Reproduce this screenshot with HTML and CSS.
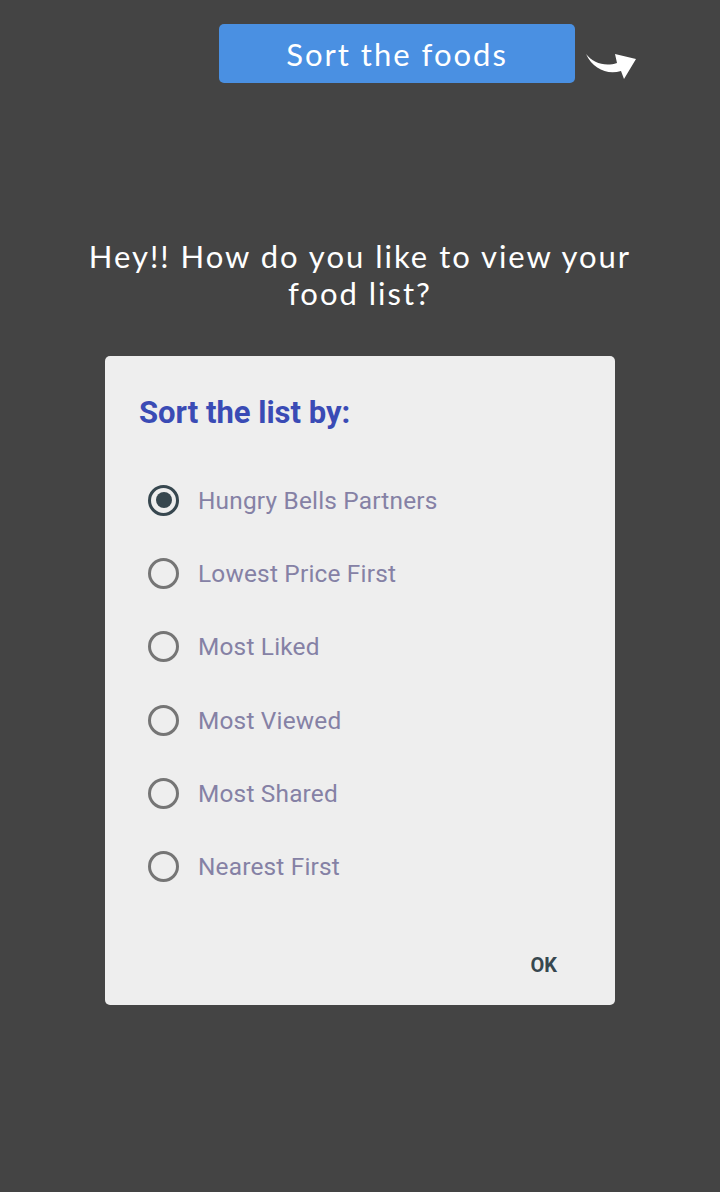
FILE: index.html
```html
<!DOCTYPE html>
<html>
<head>
<meta charset="utf-8">
<link rel="stylesheet" href="styles.css">
</head>
<body>
<div class="page">
  <div class="top">
    <div class="btn">Sort the foods</div>
    <svg class="arrow" width="56" height="36" viewBox="0 0 56 36">
      <path d="M1 5 C 8 14, 20 18, 32 14 L 30 5 L 51 10 L 39 30 L 36 22 C 22 26, 8 20, 1 5 Z" fill="#ffffff"/>
    </svg>
  </div>
  <h1 class="question">Hey!! How do you like to view your food list?</h1>
  <div class="dialog">
    <div class="title">Sort the list by:</div>
    <ul class="options">
      <li class="opt"><span class="radio checked"></span><span class="label">Hungry Bells Partners</span></li>
      <li class="opt"><span class="radio"></span><span class="label">Lowest Price First</span></li>
      <li class="opt"><span class="radio"></span><span class="label">Most Liked</span></li>
      <li class="opt"><span class="radio"></span><span class="label">Most Viewed</span></li>
      <li class="opt"><span class="radio"></span><span class="label">Most Shared</span></li>
      <li class="opt"><span class="radio"></span><span class="label">Nearest First</span></li>
    </ul>
    <div class="actions"><span class="ok">OK</span></div>
  </div>
</div>
</body>
</html>
```
FILE: styles.css
```css
html, body {
  margin: 0;
  padding: 0;
  background: #444444;
}
.page {
  width: 720px;
  height: 1192px;
  display: flex;
  flex-direction: column;
  align-items: center;
}
.top {
  align-self: stretch;
  display: flex;
  align-items: flex-start;
  margin-top: 24px;
  padding-left: 219px;
}
.btn {
  width: 356px;
  height: 59px;
  background: #4a90e2;
  border-radius: 5px;
  color: #ffffff;
  font-family: Lato, "Open Sans", sans-serif;
  font-size: 31px;
  font-weight: 400;
  letter-spacing: 2px;
  display: flex;
  align-items: center;
  justify-content: center;
}
.arrow {
  margin-left: 10px;
  margin-top: 25px;
  flex: none;
}
.question {
  margin: 153px 0 0 0;
  width: 570px;
  text-align: center;
  color: #ffffff;
  font-family: Lato, "Open Sans", sans-serif;
  font-weight: 400;
  font-size: 31px;
  line-height: 37px;
  letter-spacing: 2px;
}
.dialog {
  margin-top: 44px;
  width: 510px;
  height: 649px;
  box-sizing: border-box;
  background: #eeeeee;
  border-radius: 5px;
  padding: 37px 34px 0 34px;
  display: flex;
  flex-direction: column;
  font-family: Roboto, sans-serif;
}
.title {
  color: #3a4bb5;
  font-weight: 700;
  font-size: 31px;
  line-height: 40px;
}
.options {
  list-style: none;
  margin: 52px 0 0 0;
  padding: 0 0 0 9px;
  display: flex;
  flex-direction: column;
  gap: 43.4px;
}
.opt {
  display: flex;
  align-items: center;
  height: 30px;
}
.radio {
  width: 31px;
  height: 31px;
  box-sizing: border-box;
  border: 3px solid #757575;
  border-radius: 50%;
  flex: none;
  position: relative;
}
.radio.checked {
  border-color: #37474f;
}
.radio.checked::after {
  content: "";
  position: absolute;
  left: 4.5px;
  top: 4.5px;
  width: 16px;
  height: 16px;
  border-radius: 50%;
  background: #37474f;
}
.label {
  margin-left: 19px;
  color: #8581a5;
  font-size: 24.4px;
  letter-spacing: 0.2px;
}
.actions {
  margin-top: auto;
  margin-bottom: 28px;
  display: flex;
  justify-content: flex-end;
  padding-right: 24px;
}
.ok {
  color: #37474f;
  font-weight: 700;
  font-size: 20px;
}
```
